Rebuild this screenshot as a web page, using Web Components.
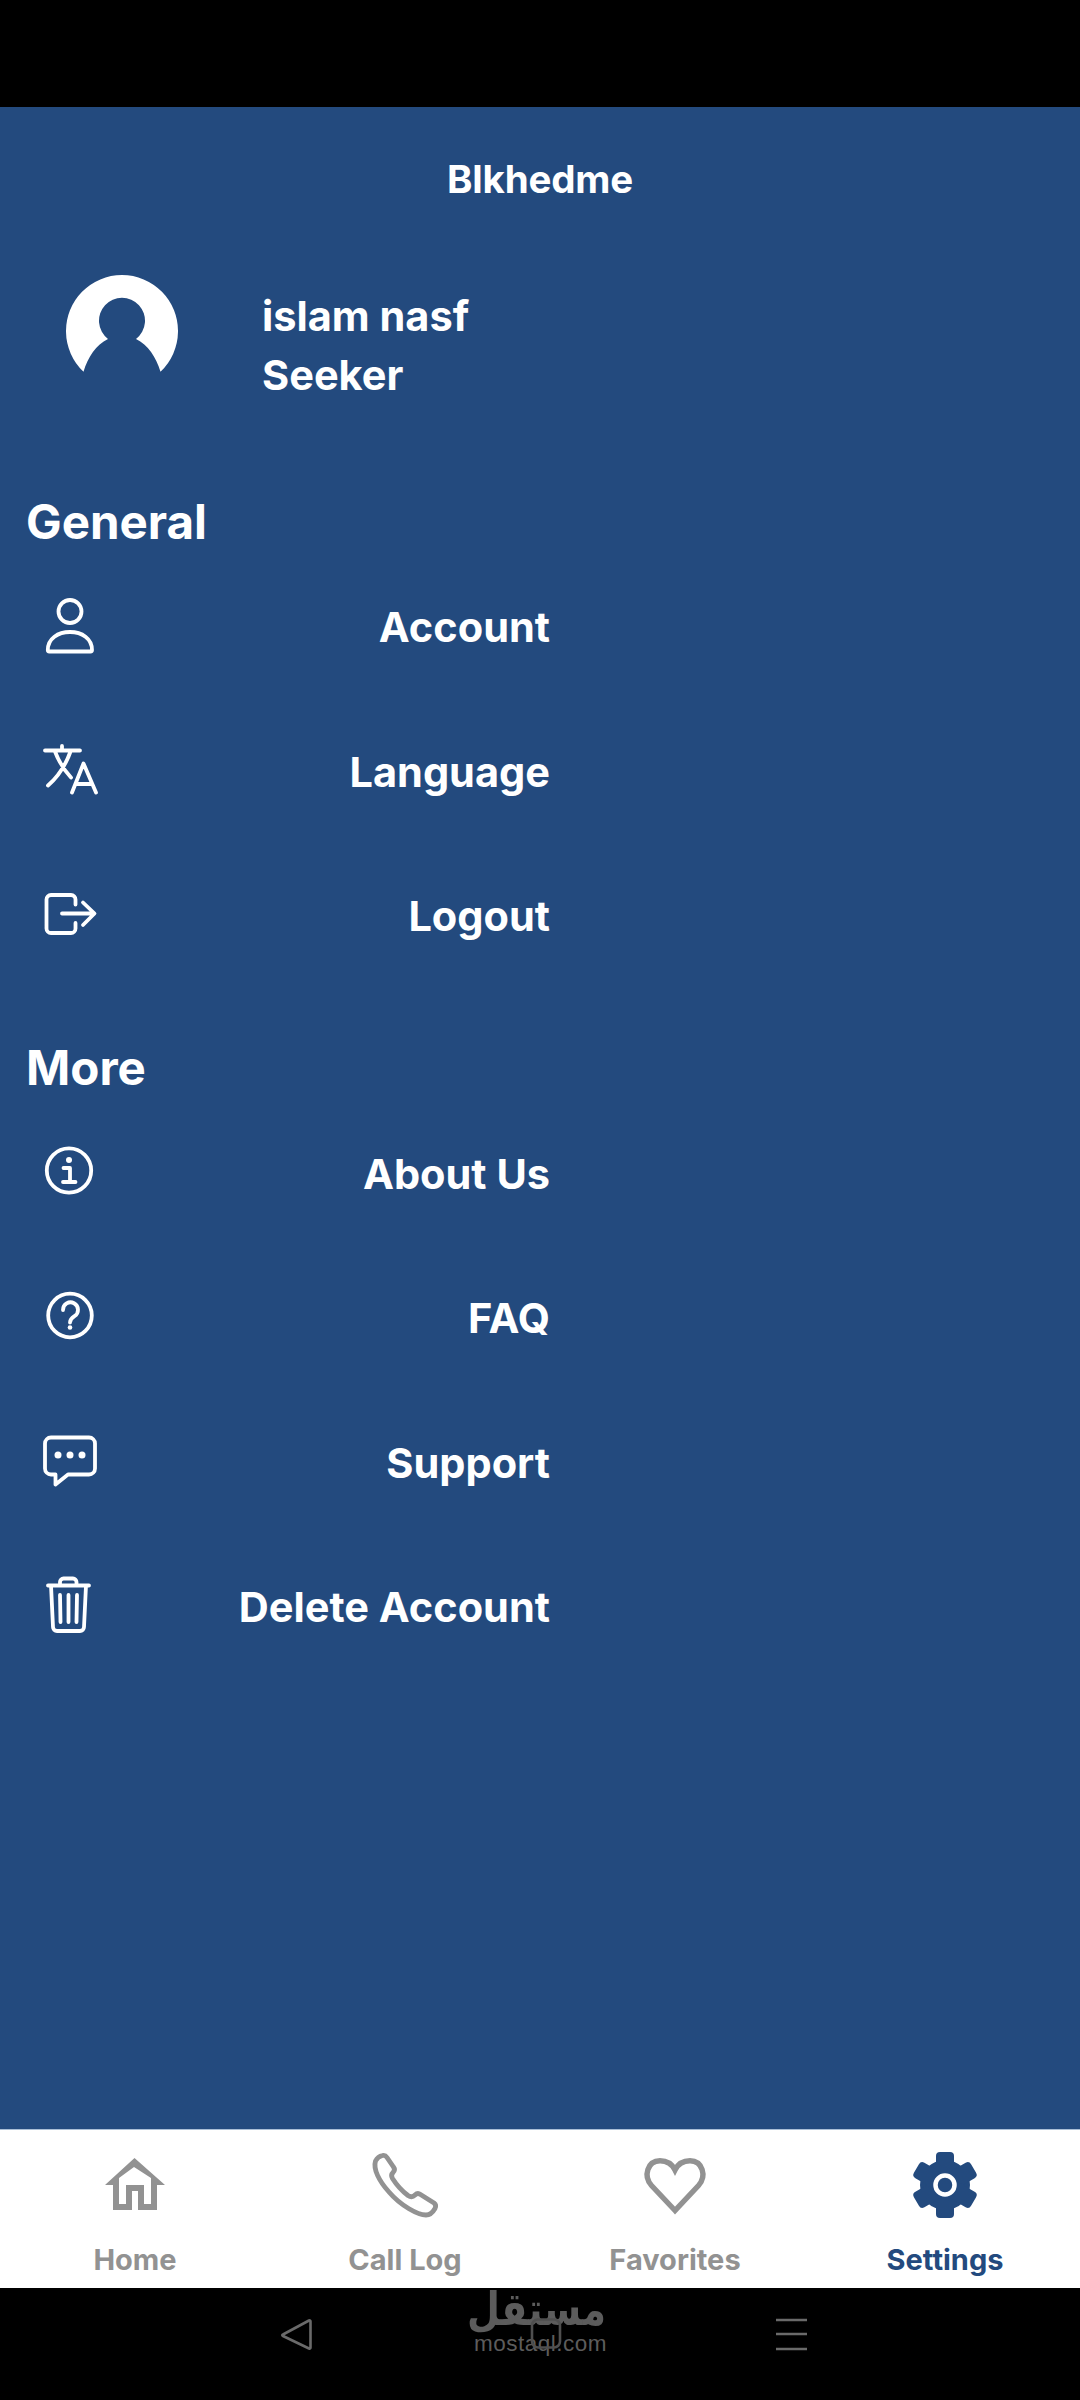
<!DOCTYPE html>
<html lang="en"><head><meta charset="utf-8"><title>Blkhedme</title>
<style>html,body{margin:0;padding:0;background:#000}</style></head>
<body>
<app-screen>
  <screen-title>Blkhedme</screen-title>
  <profile-card><span>islam nasf</span><span>Seeker</span></profile-card>
  <section-title>General</section-title>
  <menu-row icon="person">Account</menu-row>
  <menu-row icon="lang">Language</menu-row>
  <menu-row icon="logout">Logout</menu-row>
  <section-title class="more">More</section-title>
  <menu-row icon="info">About Us</menu-row>
  <menu-row icon="faq">FAQ</menu-row>
  <menu-row icon="chat">Support</menu-row>
  <menu-row icon="trash">Delete Account</menu-row>
  <tab-bar slot="tabs">
    <tab-item icon="home">Home</tab-item>
    <tab-item icon="phone">Call Log</tab-item>
    <tab-item icon="heart">Favorites</tab-item>
    <tab-item icon="gear" active>Settings</tab-item>
  </tab-bar>
  <system-nav slot="nav"></system-nav>
</app-screen>
<script>
const FONT = '"Inter","Noto Sans",sans-serif';
const MENU_ICONS = {
  person:`<circle cx="33" cy="18.500" r="11.500" fill="none"/><path d="M10.800 57C10.800 45.500 21 39 33 39S55 45.500 55 57Q55 58.500 53.500 58.500H12.300Q10.800 58.500 10.800 57Z"/>`,
  lang:`<path d="M8 13.500H43M25 9V13.500M18 14.500C22 25 27 33 34 40.500M33.500 14.500C29 27 22 39 11 48.500M35 55.500L46.500 26.500L59 55.500M39.500 47H54.500"/>`,
  logout:`<path d="M38.500 22.500V17.500a4.500 4.500 0 0 0-4.500-4.500H14a4.500 4.500 0 0 0-4.500 4.500V46.500a4.500 4.500 0 0 0 4.500 4.500H34a4.500 4.500 0 0 0 4.500-4.500V41M25 31.500H57M46 20.500L57.500 31.500L46 43"/>`,
  info:`<circle cx="32" cy="31.500" r="22.200" fill="none"/><circle cx="32" cy="21" r="3" fill="#fff" stroke="none"/><path d="M26.500 29H33V43M26 43H38.500"/>`,
  faq:`<circle cx="33" cy="31.500" r="21.800" fill="none"/><path d="M26 26a7.500 7.500 0 1 1 11.500 6.200c-3 1.900-4.500 3.300-4.500 6.300"/><circle cx="33" cy="43.500" r="2.300" fill="#fff" stroke="none"/>`,
  chat:`<path d="M14 9.500H52a6 6 0 0 1 6 6V40.500a6 6 0 0 1-6 6H31L18.500 56.500V46.500H14a6 6 0 0 1-6-6V15.500a6 6 0 0 1 6-6Z"/><circle cx="21" cy="27" r="3.500" fill="#fff" stroke="none"/><circle cx="33" cy="27" r="3.500" fill="#fff" stroke="none"/><circle cx="45" cy="27" r="3.500" fill="#fff" stroke="none"/>`,
  trash:`<path d="M11 12.500H52M14 12.500L16 54a4 4 0 0 0 4 4H43a4 4 0 0 0 4-4L49 12.500M23 12V9a3.500 3.500 0 0 1 3.500-3.500H36a3.500 3.500 0 0 1 3.500 3.500V12M23 22L23.500 49M31.500 22V49M40 22L39.500 49"/>`
};
const TAB_ICONS = {
  home:`<path fill="currentColor" fill-rule="evenodd" d="M34.500 8L65 35H57V60H38V41H32V60H13V35H5ZM34 17L19 28V54H26V35H44V54H51V28Z"/>`,
  phone:`<path fill="none" stroke="currentColor" stroke-width="4.800" stroke-linejoin="round" d="M5.500 11C7 8 10 6 12.500 5.500C14.500 5 16 6 17 7.500L23.500 17C25 19 24.500 21 23 22.500C21.500 24 21 26 22.500 28.500C26 34 32 41 38 45.500C41 47.500 43 47 45 45C46.500 43.500 48.500 43 50.500 44.500L64 53C66 54.500 66 56.500 65 58.500C63 62 60 65 56 65C48 65 31 56 19 42C9 31 3 19 5.500 11Z"/>`,
  heart:`<path fill="none" stroke="currentColor" stroke-width="5.400" stroke-linejoin="miter" d="M35 60.500L11.500 35.500C3 26 7.500 11 20 10.800C27 10.800 32 14 35 20C38 14 43 10.800 50 10.800C62.500 11 67 26 58.500 35.500Z"/>`,
  gear:`<g fill="currentColor"><circle cx="35" cy="35" r="25"/><rect x="26" y="2" width="18" height="66" rx="4"/><rect x="26" y="2" width="18" height="66" rx="4" transform="rotate(60 35 35)"/><rect x="26" y="2" width="18" height="66" rx="4" transform="rotate(120 35 35)"/></g><circle cx="35" cy="35" r="9.500" fill="none" stroke="#fff" stroke-width="4.500"/>`
};
function def(name, css, html){
  customElements.define(name, class extends HTMLElement{
    constructor(){ super(); const r=this.attachShadow({mode:'open'}); r.innerHTML=`<style>${css}</style>${typeof html==='function'?html(this):html}`; }
  });
}
def('app-screen',`
  :host{display:flex;flex-direction:column;width:1080px;height:2400px;background:#000;font-family:${FONT};overflow:hidden}
  .status{height:107px;background:#000;flex:none}
  main{flex:1;min-height:0;background:#234a7e;color:#fff;display:flex;flex-direction:column}
`,`<div class="status"></div><main><slot></slot></main><slot name="tabs"></slot><slot name="nav"></slot>`);
def('screen-title',`:host{display:flex;align-items:center;justify-content:center;height:144px;font-size:38.500px;font-weight:700;letter-spacing:-.2px}`,`<slot></slot>`);
def('profile-card',`
  :host{display:flex;margin-top:24px;height:112px;padding-left:66px}
  svg{width:112px;height:112px;flex:none;filter:blur(.7px)}
  .t{margin-left:84px;padding-top:12px;display:flex;flex-direction:column;font-size:41.500px;font-weight:700;line-height:59px}
  ::slotted(span){display:block}
`,`<svg viewBox="0 0 112 112"><path fill="#fff" d="M17.500 96.700A56 56 0 1 1 94.500 96.700C90 82 82 70 70 64A23 23 0 1 0 42 64C30 70 22 82 17.500 96.700Z"/></svg><div class="t"><slot></slot></div>`);
def('section-title',`:host{display:flex;align-items:center;height:68px;margin-top:100px;padding-left:26px;font-size:47.500px;font-weight:700}
  :host(.more){margin-top:45px}`,`<slot></slot>`);
def('menu-row',`
  :host{display:flex;align-items:center;justify-content:space-between;box-sizing:border-box;width:550px;height:144.500px;padding-left:37px;font-size:41.500px;font-weight:700}
  svg{width:64px;height:64px;flex:none;margin-bottom:5px;overflow:visible;fill:none;stroke:#fff;stroke-width:3.800;stroke-linecap:round;stroke-linejoin:round}
`,el=>`<svg viewBox="0 0 64 64">${MENU_ICONS[el.getAttribute('icon')]||''}</svg><span><slot></slot></span>`);
def('tab-bar',`:host{display:grid;grid-template-columns:repeat(4,1fr);flex:none;box-sizing:border-box;height:159px;background:#fff;border-top:1px solid #a9bed6}`,`<slot></slot>`);
def('tab-item',`
  :host{display:flex;flex-direction:column;align-items:center;color:#929292;font-size:29px;font-weight:700;padding-top:20px}
  :host([active]){color:#234a7e}
  svg{width:70px;height:70px;flex:none;overflow:visible}
  span{margin-top:20px;line-height:40px}
`,el=>`<svg viewBox="0 0 70 70">${TAB_ICONS[el.getAttribute('icon')]||''}</svg><span><slot></slot></span>`);
def('system-nav',`
  :host{position:relative;display:flex;align-items:flex-start;flex:none;height:112px;box-sizing:border-box;padding:30px 0 0 279px;background:#000}
  svg{flex:none;fill:none;stroke:#6a6a6a;stroke-width:2.600;stroke-linejoin:round}
  .back{width:34px;height:34px}
  .home{width:32px;height:34px;margin-left:217px;stroke:#4f4f4f;position:relative;z-index:1}
  .menu{width:34px;height:34px;margin-left:212px}
  .mark{position:absolute;left:474px;top:0;width:132px;color:#5c5c5c;text-align:center}
  .ar{display:block;font:700 38px/44px "DejaVu Sans",sans-serif;height:44px;direction:rtl;white-space:nowrap;transform:scaleY(1.2);transform-origin:50% 60%}
  .en{display:block;font:400 22.500px/20px "Liberation Sans",sans-serif;margin-top:2px;white-space:nowrap;letter-spacing:.5px}
`,`<svg class="back" viewBox="0 0 34 34"><path d="M4 16.500L30 2.500Q31.500 2 31.500 3.500V29.500Q31.500 31 30 30.500L4 18Q2.500 17.200 4 16.500Z"/></svg>
<svg class="home" viewBox="0 0 32 34"><rect x="2" y="1.500" width="28" height="28" rx="6"/></svg>
<svg class="menu" viewBox="0 0 34 34"><path d="M2 2H33M2 16H33M2 31H33"/></svg>
<div class="mark"><span class="ar">مستقل</span><span class="en">mostaql.com</span></div>`);
</script>
</body></html>
